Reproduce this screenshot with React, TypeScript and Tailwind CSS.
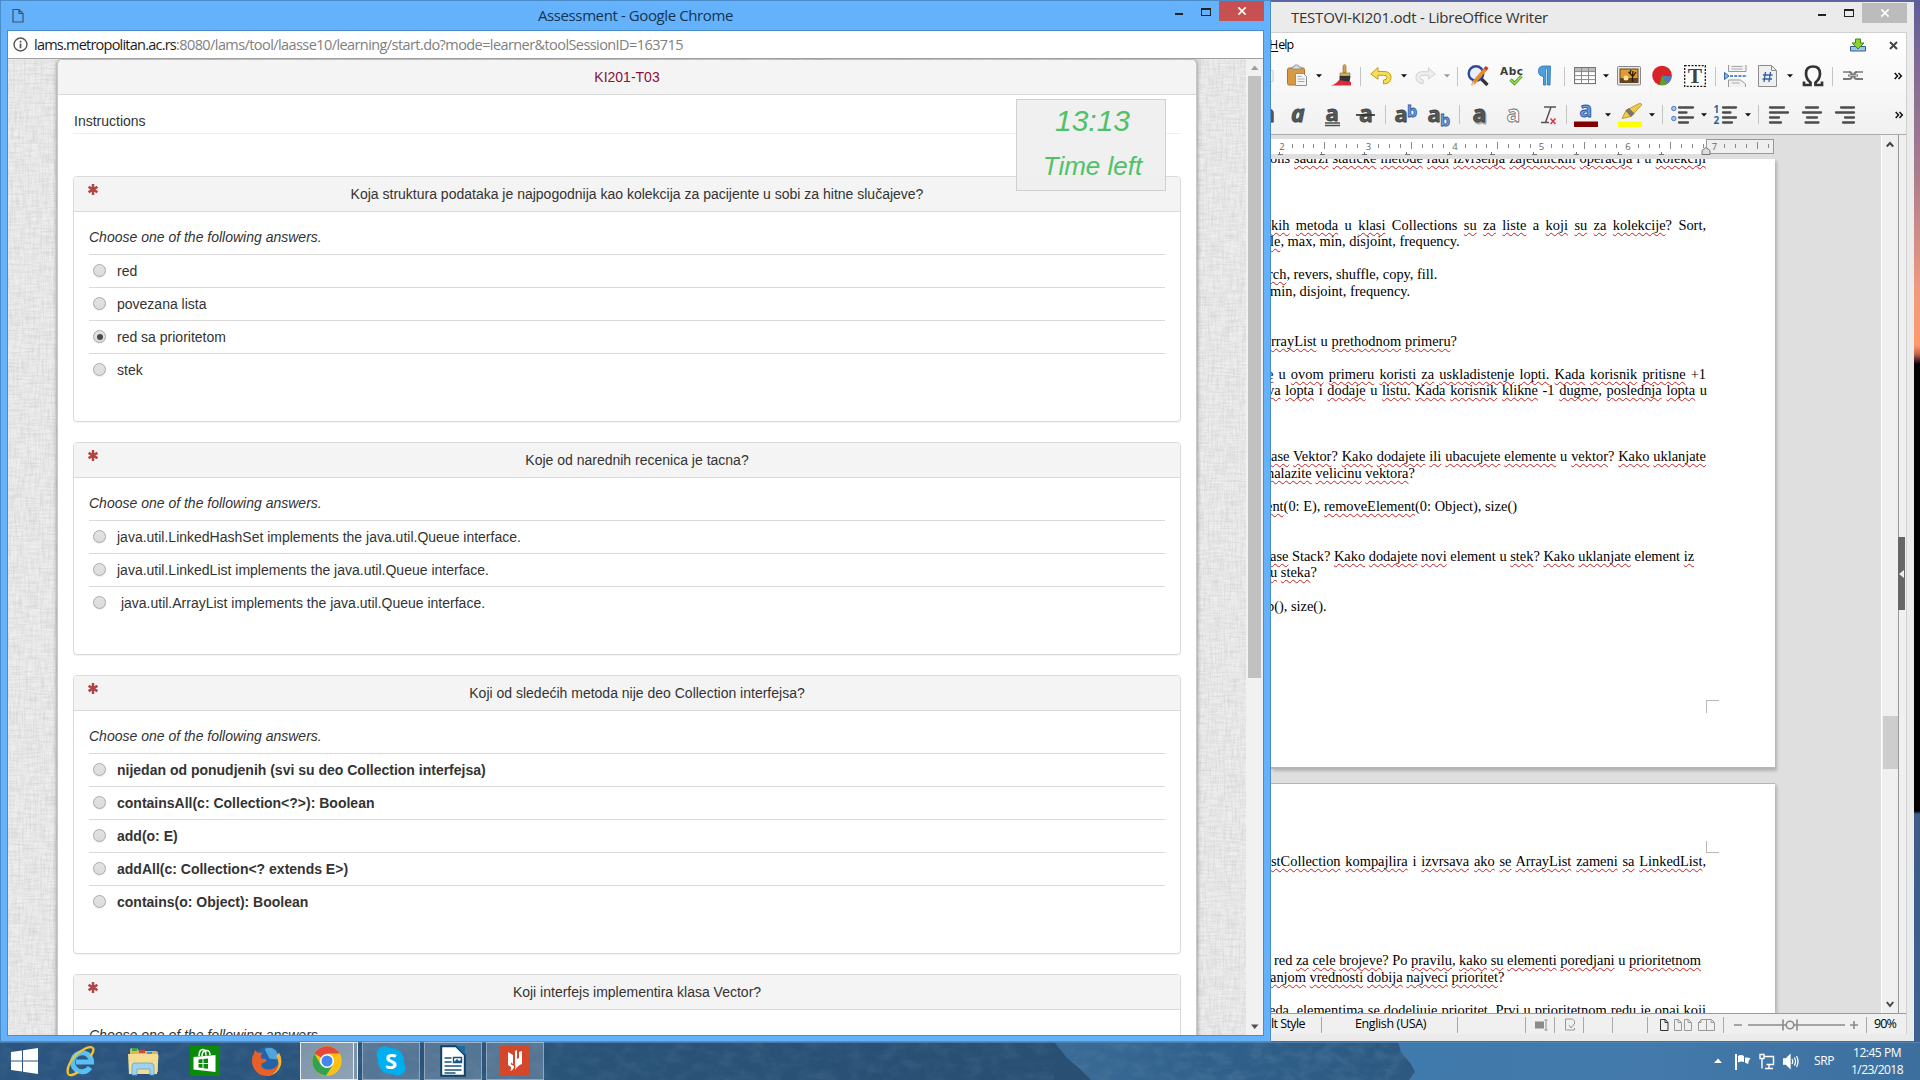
import React, { useLayoutEffect, useRef, useState } from "react";

/** Spreads a label over an exact width by adjusting its tracking. */
function Fit({ w, className = "", children }: { w: number; className?: string; children: string }) {
  const ref = useRef<HTMLSpanElement>(null);
  const [ls, setLs] = useState(0);
  useLayoutEffect(() => {
    if (ref.current) setLs((w - ref.current.getBoundingClientRect().width) / children.length);
  }, []);
  return (
    <span ref={ref} className={"inline-block whitespace-pre " + className} style={{ letterSpacing: ls }}>
      {children}
    </span>
  );
}

/* ---------- Chrome window ---------- */

type Question = { title: string; bold?: boolean; selected?: number; answers: string[] };

const questions: Question[] = [
  {
    title: "Koja struktura podataka je najpogodnija kao kolekcija za pacijente u sobi za hitne slučajeve?",
    selected: 2,
    answers: ["red", "povezana lista", "red sa prioritetom", "stek"],
  },
  {
    title: "Koje od narednih recenica je tacna?",
    answers: [
      "java.util.LinkedHashSet implements the java.util.Queue interface.",
      "java.util.LinkedList implements the java.util.Queue interface.",
      "\u00a0java.util.ArrayList implements the java.util.Queue interface.",
    ],
  },
  {
    title: "Koji od sledećih metoda nije deo Collection interfejsa?",
    bold: true,
    answers: [
      "nijedan od ponudjenih (svi su deo Collection interfejsa)",
      "containsAll(c: Collection<?>): Boolean",
      "add(o: E)",
      "addAll(c: Collection<? extends E>)",
      "contains(o: Object): Boolean",
    ],
  },
  { title: "Koji interfejs implementira klasa Vector?", answers: [] },
];

function Asterisk() {
  return (
    <svg viewBox="0 0 10 12" className="h-[11px] w-[10px]" stroke="#b04543" strokeWidth="2.7">
      <path d="M5 0v12M.2 3.1l9.6 5.8M9.8 3.1L.2 8.9" />
    </svg>
  );
}

function Radio({ on }: { on: boolean }) {
  return (
    <span className="flex size-[13px] items-center justify-center rounded-full border border-[#a9a9a9] bg-linear-to-b from-[#e2e2e2] to-[#dcdcdc] shadow-[0_1px_1px_rgba(0,0,0,0.08)]">
      {on && <span className="size-[6px] rounded-full bg-[#4a4a4a]" />}
    </span>
  );
}

function Card({ q }: { q: Question }) {
  return (
    <section className="mb-[20px] rounded-[4px] border border-[#dadada] bg-white pb-[35px] shadow-[0_1px_1px_rgba(0,0,0,0.05)]">
      <header className="flex h-[35px] rounded-t-[3px] border-b border-[#dadada] bg-[#f4f4f4] pl-[14px]">
        <div className="pt-[7px]">
          <Asterisk />
        </div>
        <h2 className="flex-1 pr-[4px] text-center leading-[35px]">{q.title}</h2>
      </header>
      <div className="px-[15px]">
        <p className="pt-[15px] pb-[7px] italic leading-[20px]">Choose one of the following answers.</p>
        {q.answers.map((a, i) => (
          <div key={a} className="flex h-[33px] border-t border-[#dadada] pl-[4px]">
            <div className="pt-[9px]">
              <Radio on={q.selected === i} />
            </div>
            <span className={q.bold ? "pl-[11px] font-bold leading-[32px]" : "pl-[11px] leading-[32px]"}>{a}</span>
          </div>
        ))}
      </div>
    </section>
  );
}

function Linen() {
  return (
    <svg className="absolute inset-0 h-full w-full">
      <filter id="lv" x="0" y="0" width="100%" height="100%">
        <feTurbulence type="fractalNoise" baseFrequency="0.55 0.06" numOctaves="3" seed="4" />
        <feColorMatrix values="0 0 0 0 .55  0 0 0 0 .55  0 0 0 0 .55  .8 0 0 0 -.3" />
      </filter>
      <filter id="lh" x="0" y="0" width="100%" height="100%">
        <feTurbulence type="fractalNoise" baseFrequency="0.06 0.55" numOctaves="3" seed="9" />
        <feColorMatrix values="0 0 0 0 .55  0 0 0 0 .55  0 0 0 0 .55  .8 0 0 0 -.3" />
      </filter>
      <rect width="100%" height="100%" fill="#eeeeee" />
      <rect width="100%" height="100%" filter="url(#lv)" />
      <rect width="100%" height="100%" filter="url(#lh)" />
    </svg>
  );
}

function WindowButtons({ closeClass, mark }: { closeClass: string; mark: string }) {
  return (
    <div className="flex">
      <svg className="h-[22px] w-[44px]" fill="none" shapeRendering="crispEdges">
        <path d="M0 13h8" stroke="#222" strokeWidth="2" />
        <path d="M26.5 7.5h9v7h-9z" stroke="#222" />
        <path d="M26 7.5h10" stroke="#222" strokeWidth="2" />
      </svg>
      <div className={"flex h-[20px] w-[45px] items-center justify-center " + closeClass}>
        <svg viewBox="0 0 8 8" className="size-[8px]" stroke={mark} strokeWidth="1.7">
          <path d="M.4.4l7.2 7.2M7.6.4L.4 7.6" />
        </svg>
      </div>
    </div>
  );
}

function ChromeWindow() {
  return (
    <div className="flex h-[1042px] w-[1271px] flex-col border border-[#4a8cc8] bg-[#64b2fb]">
      <div className="flex h-[29px] items-start">
        <svg className="mt-[7px] ml-[11px] h-[16px] w-[12px]" fill="none" stroke="#3c5468" strokeWidth="1.2">
          <path d="M1 1.5h6l4 4V14H1zM7 1.5v4h4" />
        </svg>
        <div className="flex-1 pl-[514px] text-[15px] leading-[29px] text-[#16344f]">
          <Fit w={195}>Assessment - Google Chrome</Fit>
        </div>
        <div className="mr-[6px]">
          <WindowButtons closeClass="bg-[#c75050]" mark="#fff" />
        </div>
      </div>
      <div className="mx-[6px] mb-[5px] flex min-h-0 flex-1 flex-col border border-[#4a8cc8] bg-white">
        <div className="flex h-[28px] shrink-0 items-center border-b border-[#a0a0a0] pl-[5px] text-[14.5px]">
          <svg viewBox="0 0 16 16" className="mr-[6px] size-[15px]" fill="none" stroke="#555" strokeWidth="1.5">
            <circle cx="8" cy="8" r="6.9" />
            <path d="M8 7v5M8 4v1.8" strokeWidth="1.8" />
          </svg>
          <Fit w={142} className="text-[#1c1c1c]">lams.metropolitan.ac.rs</Fit>
          <Fit w={507} className="text-[#808080]">:8080/lams/tool/laasse10/learning/start.do?mode=learner&toolSessionID=163715</Fit>
        </div>
        <div className="flex min-h-0 flex-1">
          <div className="relative min-w-0 flex-1 overflow-hidden pr-[49px] pl-[49px] font-['Liberation_Sans',Arial,sans-serif] text-[14px] text-[#333]">
            <Linen />
            <main className="relative mt-px rounded-t-[5px] border-x border-[#c8c8c8] bg-white shadow-[0_0_4px_rgba(0,0,0,0.45)]">
              <h1 className="h-[35px] rounded-t-[5px] border-b border-[#dadada] bg-[#f4f4f4] text-center leading-[34px] text-[#8b0f3c]">KI201-T03</h1>
              <div className="px-[15px] pt-[16px]">
                <div className="mb-[42px] h-[23px] border-b border-[#f0f0f0] pl-px leading-[20px]">Instructions</div>
                {questions.map((q) => (
                  <Card key={q.title} q={q} />
                ))}
              </div>
              <div className="absolute top-[39px] right-[30px] flex h-[92px] w-[150px] flex-col items-center border border-[#cfcfcf] bg-[#eeeeee]/90 pl-[3px] text-[#4fc267] italic">
                <span className="pt-[4px] text-[30px] leading-[34px]">13:13</span>
                <span className="pt-[13px] text-[26px] leading-[30px]">Time left</span>
              </div>
            </main>
          </div>
          <div className="flex w-[17px] flex-col items-center bg-[#f1f1f1]">
            <svg className="h-[17px] w-[15px]" fill="#9c9c9c">
              <path d="M4 11h7.5L7.7 6.5z" />
            </svg>
            <div className="h-[602px] w-[13px] bg-[#c1c1c1]" />
            <div className="flex-1" />
            <svg className="h-[17px] w-[15px]" fill="#505050">
              <path d="M4 6.5h7.5L7.7 11z" />
            </svg>
          </div>
        </div>
      </div>
    </div>
  );
}

/* ---------- LibreOffice Writer ---------- */

const Sep = ({ c }: { c: string }) => <div className={"h-[19px] w-px shrink-0 bg-[#c4c4c4] " + c} />;
const Drop = ({ c, fill = "#111" }: { c: string; fill?: string }) => (
  <svg viewBox="0 0 6 4" className={"h-[4px] w-[6px] shrink-0 " + c} fill={fill}>
    <path d="M0 .3h6L3 3.6z" />
  </svg>
);
const Ico = ({ c, children, vb = "0 0 24 24" }: { c: string; children: React.ReactNode; vb?: string }) => (
  <svg viewBox={vb} className={"h-[24px] shrink-0 overflow-visible " + c} fill="none">
    {children}
  </svg>
);
const serif = "Liberation Serif";
const sans = "Open Sans";
const dejavu = "DejaVu Sans";
const More = ({ c }: { c: string }) => (
  <Ico c={"w-[8px] " + c} vb="0 0 8 24">
    <path d="M.7 9l2.8 3-2.8 3M4.5 9l2.8 3-2.8 3" stroke="#111" strokeWidth="1.5" />
  </Ico>
);

function StandardBar() {
  return (
    <div className="flex h-[38px] items-center overflow-hidden">
      <Ico c="w-[4px]" vb="0 0 4 24">
        <path d="M-6 6.500h8v11h-8" stroke="#ccc" />
      </Ico>
      <Ico c="ml-[12px] w-[20px]" vb="0 0 20 24">
        <rect x=".5" y="4" width="17" height="17" rx="1.5" fill="#d69a45" stroke="#a87432" />
        <path d="M5 5V3h2l1-2h3l1 2h2v2z" fill="#ddd" stroke="#888" strokeWidth=".8" />
        <path d="M8.500 9.500h8l3 3v9h-11z" fill="#f5f5f5" stroke="#909090" />
        <path d="M10.500 12.500h4M10.500 15h7M10.500 17.500h7" stroke="#aaa" />
      </Ico>
      <Drop c="ml-[9px]" />
      <Ico c="ml-[8px] w-[22px]" vb="0 0 22 24">
        <path d="M13 3q0-2.500 1.500-2.500T16 3v6h-3z" fill="#d6a04a" stroke="#9b6f2c" strokeWidth=".7" />
        <path d="M10 9h10v3H10z" fill="#d9b060" stroke="#8b6a30" strokeWidth=".6" />
        <path d="M9.500 12h11l-1 6h-10z" fill="#333" />
        <path d="M9 16c-2 3-5 4.500-8 5.500h20V18z" fill="#d92b3a" />
      </Ico>
      <Sep c="ml-[8px]" />
      <Ico c="ml-[9px] w-[22px]" vb="0 0 22 24">
        <path d="M.8 10L8 3.500v4h6q7 0 7 6t-7.500 6.500v-4q3.500 0 3.500-2.500t-3.500-2.200H8v4z" fill="#f4dc5c" stroke="#c3a015" />
      </Ico>
      <Drop c="ml-[9px]" />
      <Ico c="ml-[8px] w-[21px]" vb="0 0 22 24">
        <path d="M21.200 10L14 3.500v4H8q-7 0-7 6T8.500 20v-4Q5 16 5 13.500t3.500-2.200H14v4z" fill="#eee" stroke="#cfcfcf" />
      </Ico>
      <Drop c="ml-[8px]" fill="#999" />
      <Sep c="ml-[7px]" />
      <Ico c="ml-[9px] w-[22px]" vb="0 0 22 24">
        <circle cx="9" cy="9.500" r="7.300" fill="#e8eefa" stroke="#2b4a9b" strokeWidth="2.400" />
        <path d="M14.500 15l6 6" stroke="#333" strokeWidth="3.200" />
        <path d="M6 19.500L19 4.500" stroke="#e88a2a" strokeWidth="3.600" />
        <path d="M18.200 5.400l2-2.300" stroke="#c5372f" strokeWidth="3.600" />
        <path d="M4.300 21.500l2.600-3" stroke="#e8c89a" strokeWidth="2" />
      </Ico>
      <Ico c="ml-[12px] w-[22px]" vb="0 0 22 24">
        <text x="-1" y="10.500" fontFamily={dejavu} fontWeight="700" fontSize="10.500" textLength="23" fill="#3a3a3a">Abc</text>
        <path d="M9.500 15.500l4 4L20.500 12" stroke="#4e9a1f" strokeWidth="3.200" />
        <path d="M9.500 15.500l4 4L20.500 12" stroke="#9be05a" strokeWidth="1.500" />
      </Ico>
      <Ico c="ml-[15px] w-[13px]" vb="0 0 13 24">
        <path d="M12.500 2H6Q.5 2 .5 7t5 5.500V21h2.300V4.500h1.700V21H12z" fill="#4aa0dc" stroke="#2c6ea8" strokeWidth=".8" />
      </Ico>
      <Sep c="ml-[13px]" />
      <Ico c="ml-[9px] w-[22px]" vb="0 0 22 24">
        <rect x=".6" y="3.600" width="20.800" height="16" fill="#fff" stroke="#666" />
        <rect x="1" y="4" width="20" height="3.500" fill="#bbb" />
        <path d="M.6 7.600h21M.6 11.600h21M.6 15.600h21M7.500 4v16M14.500 4v16" stroke="#888" />
      </Ico>
      <Drop c="ml-[7px]" />
      <Ico c="ml-[8px] w-[24px]" vb="0 0 24 24">
        <rect x=".5" y="2.500" width="23" height="18.500" rx="1" fill="#e8e8e8" stroke="#888" />
        <rect x="3" y="5" width="18" height="13.500" fill="#e59a2d" stroke="#5a4630" />
        <path d="M3 14h18v4H3z" fill="#6a4318" />
        <circle cx="9" cy="14" r="2.500" fill="#ffe79a" />
        <path d="M15.500 18v-6l-4-4M15.500 13l3.500-5M13 9l1-3M15.500 12l.5-5" stroke="#2a1c10" strokeWidth="1.300" />
      </Ico>
      <Ico c="ml-[11px] w-[20px]" vb="0 0 20 24">
        <circle cx="10" cy="11.500" r="9.800" fill="#d8232b" />
        <path d="M10 11.500l9.700 1A9.800 9.800 0 0 1 15 20z" fill="#4a7fc0" />
        <path d="M10 11.500l5 8.500a9.800 9.800 0 0 1-7.500.9z" fill="#59a52c" />
      </Ico>
      <Ico c="ml-[12px] w-[22px]" vb="0 0 22 24">
        <rect x=".7" y="1.700" width="20.600" height="20.600" fill="#fff" stroke="#111" strokeWidth="1.300" strokeDasharray="2 1.400" />
        <text x="3.800" y="19" fontFamily={serif} fontWeight="700" fontSize="21.500" fill="#3f4442">T</text>
      </Ico>
      <Sep c="ml-[9px]" />
      <Ico c="ml-[8px] w-[23px]" vb="0 0 23 24">
        <path d="M4.500 1v6.500h17.500V1M4.500 23v-7h12l5 4v3" fill="#f2f2f2" stroke="#999" />
        <path d="M7.500 2.500h11M7.500 5h11M7.500 19h8" stroke="#aaa" />
        <path d="M6 12h17" stroke="#2d65b5" strokeWidth="1.700" strokeDasharray="3 1.200" />
        <path d="M.5 8.500l4.500 3.500-4.500 3.500z" fill="#8fb2e3" stroke="#2d65b5" />
      </Ico>
      <Ico c="ml-[11px] w-[19px]" vb="0 0 19 24">
        <path d="M.5 1.500h13l5 5v16H.5z" fill="#efefef" stroke="#8c8c8c" />
        <path d="M13.500 1.500v5h5" stroke="#8c8c8c" />
        <path d="M7.500 8L6 18M12.500 8L11 18M5 11h9.500M4.500 15H14" stroke="#2f5da8" strokeWidth="1.300" />
      </Ico>
      <Drop c="ml-[10px]" />
      <Ico c="ml-[10px] w-[20px]" vb="0 0 20 24">
        <path d="M1 17.500v3.500h6.500v-2.500Q3 15 3 9.500 3 2.500 10 2.500t7 7q0 5.500-4.500 9V21H19v-3.500" stroke="#333" strokeWidth="2.700" />
      </Ico>
      <Sep c="ml-[9px]" />
      <Ico c="ml-[9px] w-[22px]" vb="0 0 22 24">
        <path d="M1 8h6q3 0 3 3.500T7 15H1M21 8h-6q-3 0-3 3.500t3 3.500h6M6 11.500h10" stroke="#777" strokeWidth="2" />
        <path d="M1 8h6M21 8h-6M7 11.500h8" stroke="#ccc" strokeWidth=".8" />
      </Ico>
      <More c="ml-[30px]" />
    </div>
  );
}

const A = ({ x = 0, y = 19, size = 23, fill = "#555a58", stroke = "#3b3f3d", it = false }) => (
  <text x={x} y={y} fontFamily={sans} fontWeight="700" fontSize={size} fontStyle={it ? "italic" : "normal"} fill={fill} stroke={stroke} strokeWidth=".8">a</text>
);
const lineInk = "#4a4d4a";

function FormattingBar() {
  return (
    <div className="flex h-[39px] items-center overflow-hidden">
      <Ico c="w-[4px]" vb="0 0 4 24"><A x={-10} /></Ico>
      <Ico c="ml-[15px] w-[18px]" vb="0 0 18 24"><A x={1} it /></Ico>
      <Ico c="ml-[17px] w-[15px]" vb="0 0 15 24">
        <A x={.5} y={17.500} size={22} />
        <path d="M0 20h15M0 22.500h15" stroke={lineInk} strokeWidth="1.300" />
      </Ico>
      <Ico c="ml-[16px] w-[19px]" vb="0 0 19 24">
        <A x={3} />
        <path d="M0 12h19" stroke="#333" strokeWidth="1.700" />
      </Ico>
      <Sep c="ml-[10px]" />
      <Ico c="ml-[8px] w-[23px]" vb="0 0 23 24">
        <A x={.5} size={22} />
        <text x="13" y="14" fontFamily={sans} fontWeight="700" fontSize="16" fill="#6b9bd8" stroke="#2c5aa0" strokeWidth=".8">b</text>
      </Ico>
      <Ico c="ml-[10px] w-[23px]" vb="0 0 23 24">
        <A x={.5} size={22} />
        <text x="13" y="22.500" fontFamily={sans} fontWeight="700" fontSize="16" fill="#6b9bd8" stroke="#2c5aa0" strokeWidth=".8">b</text>
      </Ico>
      <Sep c="ml-[9px]" />
      <Ico c="ml-[12px] w-[15px]" vb="0 0 15 24">
        <A x={1.800} y={20.500} fill="#aaa" stroke="#aaa" />
        <A x={.5} />
      </Ico>
      <Ico c="ml-[19px] w-[15px]" vb="0 0 15 24"><A x={.5} fill="#fff" stroke="#666" /></Ico>
      <Ico c="ml-[20px] w-[15px]" vb="0 0 15 24">
        <path d="M3 4h12M10 4L4.500 19.500M0 19.500h8" stroke="#555" strokeWidth="1.500" />
        <path d="M9.500 15.500l5 5.500M14.500 15.500l-5 5.500" stroke="#d9344a" strokeWidth="1.500" />
      </Ico>
      <Sep c="ml-[10px]" />
      <Ico c="ml-[7px] w-[24px]" vb="0 0 24 24">
        <text x="5.500" y="13.500" fontFamily={sans} fontWeight="700" fontSize="21" fill="#6b9bd8" stroke="#2c5aa0" strokeWidth=".9">a</text>
        <path d="M0 18.500h24V24H0z" fill="#800000" />
      </Ico>
      <Drop c="ml-[7px]" />
      <Ico c="ml-[7px] w-[24px]" vb="0 0 24 24">
        <path d="M4 15.500l4-8L20 1q4-1.500 3.500 1L13 13.500z" fill="#f0c94a" stroke="#b38a1c" strokeWidth=".8" />
        <path d="M8 7.500l3-2 5 5-3 3z" fill="#777" stroke="#555" strokeWidth=".6" />
        <path d="M0 18.500h24V24H0z" fill="#ffff00" />
      </Ico>
      <Drop c="ml-[7px]" />
      <Sep c="ml-[7px]" />
      <Ico c="ml-[8px] w-[23px]" vb="0 0 23 24">
        <circle cx="2.800" cy="5.500" r="2.200" fill="#a9c5ea" stroke="#4a7abd" />
        <circle cx="2.800" cy="15.500" r="2.200" fill="#a9c5ea" stroke="#4a7abd" />
        <path d="M8 4.500h14M8 9.500h7.500M8 14.500h14M8 19.500h9" stroke={lineInk} strokeWidth="2.300" strokeLinecap="round" />
      </Ico>
      <Drop c="ml-[7px]" />
      <Ico c="ml-[7px] w-[23px]" vb="0 0 23 24">
        <text x="-.5" y="9.500" fontFamily={sans} fontWeight="700" fontSize="10" fill="#2f5f9f">1</text>
        <text x="-.5" y="21" fontFamily={sans} fontWeight="700" fontSize="10" fill="#2f5f9f">2</text>
        <path d="M9 4.500h13M9 9.500h7.500M9 14.500h13M9 19.500h9" stroke={lineInk} strokeWidth="2.300" strokeLinecap="round" />
      </Ico>
      <Drop c="ml-[8px]" />
      <Sep c="ml-[7px]" />
      <Ico c="ml-[10px] w-[20px]" vb="0 0 20 24">
        <path d="M1 4.500h14M1 9.500h18M1 14.500h9M1 19.500h11" stroke={lineInk} strokeWidth="2.300" strokeLinecap="round" />
      </Ico>
      <Ico c="ml-[13px] w-[20px]" vb="0 0 20 24">
        <path d="M4 4.500h12M1 9.500h18M5 14.500h10M3.500 19.500h13" stroke={lineInk} strokeWidth="2.300" strokeLinecap="round" />
      </Ico>
      <Ico c="ml-[13px] w-[20px]" vb="0 0 20 24">
        <path d="M6 4.500h13M1 9.500h18M10 14.500h9M8 19.500h11" stroke={lineInk} strokeWidth="2.300" strokeLinecap="round" />
      </Ico>
      <More c="ml-[40px]" />
    </div>
  );
}

function Ruler() {
  const ticks: React.ReactNode[] = [];
  for (let i = 0; i <= 45; i++) {
    const x = 10.5 + (i * 86.5) / 8;
    if (x > 502) break;
    if (i % 8 === 0) ticks.push(<text key={i} x={x + 0.5} y="11" textAnchor="middle" fontSize="9.500" fontFamily={sans} fill="#666">{2 + i / 8}</text>);
    else ticks.push(<path key={i} d={i % 8 === 4 ? `M${x} 3v7` : `M${x} 5v4`} stroke="#888" />);
  }
  const stops: React.ReactNode[] = [];
  for (let i = 0; i < 11; i++) stops.push(<path key={i} d={`M${8.5 + i * 42.4} 13v3M${6.5 + i * 42.4} 15.500h5`} stroke="#777" />);
  return (
    <svg className="mt-[4px] h-[16px] w-[504px]" fill="none" shapeRendering="crispEdges">
      <rect width="436" height="15" fill="#fff" />
      <rect x="435.500" y=".5" width="67" height="14" fill="#efefef" stroke="#999" />
      {ticks}
      {stops}
      <path d="M431 15.500v-4l4-3 4 3v4z" fill="#ddd" stroke="#777" shapeRendering="auto" />
    </svg>
  );
}

/* A line of the document: [left start, width, text]; words between underscores are misspelt. */
type Line = [number, number, string] | null;

const pageOne: Line[] = [
  [-1, 436, "ons _sadrzi_ _staticke_ _metode_ _radi_ _izvrsenja_ _zajednickih_ _operacija_ i u _kolekciji_"],
  null, null, null,
  [0, 435, "_kih_ _metoda_ u _klasi_ Collections _su_ _za_ _liste_ a _koji_ _su_ _za_ _kolekcije_? Sort,"],
  [-1, 188, "_le_, max, min, disjoint, frequency."],
  null,
  [-3, 168, "_rch_, revers, shuffle, copy, fill."],
  [-1, 139, "min, disjoint, frequency."],
  null, null,
  [0, 186, "_rrayList_ u _prethodnom_ _primeru_?"],
  null,
  [-4, 439, "_e_ u _ovom_ _primeru_ _koristi_ _za_ _uskladistenje_ _lopti._ _Kada_ _korisnik_ _pritisne_ +1"],
  [-4, 440, "_va_ _lopta_ i _dodaje_ u _listu._ _Kada_ _korisnik_ _klikne_ -1 _dugme_, _poslednja_ _lopta_ u"],
  null, null, null,
  [0, 435, "_ase_ _Vektor_? _Kako_ _dodajete_ _ili_ _ubacujete_ _elemente_ u _vektor_? _Kako_ _uklanjate_"],
  [-4, 146, "_nalazite_ _velicinu_ _vektora_?"],
  null,
  [-5, 247, "_ent_(0: E), _removeElement_(0: Object), size()"],
  null, null,
  [-1, 423, "_ase_ Stack? _Kako_ _dodajete_ _novi_ element u _stek_? _Kako_ _uklanjate_ element _iz_"],
  [-1, 46, "_u_ _steka_?"],
  null,
  [-4, 58, "p(), size()."],
];

const pageTwo: Line[] = [
  [0, 435, "_stCollection_ _kompajlira_ i _izvrsava_ _ako_ _se_ _ArrayList_ _zameni_ _sa_ _LinkedList_,"],
  null, null, null, null, null,
  [3, 427, "red _za_ _cele_ _brojeve_? Po _pravilu_, _kako_ _su_ _elementi_ _poredjani_ u _prioritetnom_"],
  [-1, 234, "_anjom_ _vrednosti_ _dobija_ _najveci_ _prioritet_?"],
  null,
  [-2, 437, "_eda_, _elementima_ _se_ _dodeljuje_ _prioritet_. _Prvi_ u _prioritetnom_ _redu_ je _onaj_ _koji_"],
];

function Lines({ lines }: { lines: Line[] }) {
  return (
    <>
      {lines.map((l, i) => (
        <div key={i} className="h-[16.57px] leading-[16.57px] whitespace-nowrap">
          {l && (
            <div className="[text-align-last:justify]" style={{ marginLeft: l[0], width: l[1] }}>
              {l[2].split("_").map((t, k) =>
                k % 2 ? (
                  <span key={k} className="underline decoration-[#c02020] decoration-wavy decoration-[0.8px] underline-offset-[2px] [text-decoration-skip-ink:none]">{t}</span>
                ) : (
                  t
                ),
              )}
            </div>
          )}
        </div>
      ))}
    </>
  );
}

function Document() {
  return (
    <div className="h-[854px] overflow-hidden bg-[#dfdfdf] font-['Liberation_Serif',serif] text-[14.4px] text-black">
      <div className="h-[610px] w-[504px] overflow-hidden border-b-2 border-[#b4b4b4] bg-white shadow-[2px_2px_3px_rgba(0,0,0,0.2)]">
        <div className="mt-[-8.7px] h-[549.7px]">
          <Lines lines={pageOne} />
        </div>
        <div className="ml-[435px] h-[13px] w-[13px] border-t border-l border-[#b8b8b8]" />
      </div>
      <div className="mt-[14px] h-[300px] w-[504px] border-t border-[#b4b4b4] bg-white shadow-[2px_2px_3px_rgba(0,0,0,0.2)]">
        <div className="h-[57px]" />
        <div className="ml-[435px] h-[12px] w-[13px] border-b border-l border-[#b8b8b8]" />
        <Lines lines={pageTwo} />
      </div>
    </div>
  );
}

function StatusBar() {
  const s = "h-[16px] w-px shrink-0 bg-[#a8a8a8] ";
  return (
    <div className="flex h-[22px] items-center border-t border-[#9a9a9a] bg-[#f0f0f0] pt-px text-[12.5px] text-black">
      <Fit w={34}>lt Style</Fit>
      <div className={s + "ml-[16px]"} />
      <Fit w={71} className="ml-[33px]">English (USA)</Fit>
      <div className={s + "ml-[31px]"} />
      <div className={s + "ml-[67px]"} />
      <svg className="ml-[9px] h-[12px] w-[13px] shrink-0" stroke="#8a8a8a">
        <path d="M0 6h9" strokeWidth="7" />
        <path d="M11 1v10M9.500 1h3M9.500 11h3" />
      </svg>
      <div className={s + "ml-[6px]"} />
      <svg className="ml-[10px] h-[14px] w-[12px] shrink-0" fill="none" stroke="#999">
        <path d="M9.500 5V3l-2-2H.5v11h9v-2M4 7l2 3 4-5" />
      </svg>
      <div className={s + "ml-[6px]"} />
      <div className={s + "ml-[28px]"} />
      <div className={s + "ml-[34px]"} />
      <svg className="ml-[12px] h-[12px] w-[56px] shrink-0" fill="none">
        <path d="M.5.500h5l2.500 3v8H.5zM5 .5v3h3" stroke="#333" />
        <path d="M14.500.500h4l3 3v8h-7zM18 .5v3h3M24.500.500h4l3 3v8h-7zM28 .5v3h3" stroke="#999" />
        <path d="M46.500 11.500h-8v-8l3-3h5zM46.500.500h5l3 3v8h-8zM41 .5v3h-3M51 .5v3h3" stroke="#999" />
      </svg>
      <div className={s + "ml-[7px]"} />
      <svg className="ml-[10px] h-[14px] w-[126px] shrink-0" fill="none" stroke="#8a8a8a" strokeWidth="1.600">
        <path d="M0 7h8M14 7h97M116 7h8M120 3v8M49 1.500v11M63 1.500v11" />
        <circle cx="56" cy="7" r="3.800" fill="#f0f0f0" />
      </svg>
      <div className={s + "ml-[6px]"} />
      <Fit w={22} className="ml-[7px]">90%</Fit>
    </div>
  );
}

function WriterWindow() {
  return (
    <div className="flex h-[1041px] w-[643px] flex-col border-t-2 border-[#5d66a2] bg-[#ebebeb]">
      <div className="flex h-[30px] items-start">
        <div className="flex-1 pl-[20px] text-[15px] leading-[30px] text-[#333]">
          <Fit w={257}>TESTOVI-KI201.odt - LibreOffice Writer</Fit>
        </div>
        <div className="mr-[7px]">
          <WindowButtons closeClass="mt-px bg-[#bcbcbc]" mark="#fff" />
        </div>
      </div>
      <div className="mr-[7px] flex h-[1002px] flex-col border-t border-r border-[#d0d0d0] bg-[#dfdfdf]">
        <div className="h-[102px] border-b border-[#acacac] bg-linear-to-b from-white to-[#f1f1f1]">
          <div className="flex h-[24px] items-center overflow-hidden text-[12.5px] text-black">
            <div className="-ml-[2px] flex">
              <span className="underline underline-offset-2">H</span>
              <Fit w={15}>elp</Fit>
            </div>
            <svg className="ml-[557px] h-[14px] w-[16px]">
              <path d="M.5 8.500h15v4.500H.5z" fill="#9cc3e8" stroke="#2d5e94" />
              <path d="M5.500 1h5v4H14l-6 6-6-6h3.500z" fill="#8bd32f" stroke="#47821a" />
            </svg>
            <svg className="ml-[23px] h-[9px] w-[9px]" stroke="#444" strokeWidth="2">
              <path d="M1 1l7 7M8 1L1 8" />
            </svg>
          </div>
          <StandardBar />
          <FormattingBar />
        </div>
        <div className="flex h-[878px]">
          <div className="w-[610px]">
            <Ruler />
            <div className="h-[4px]" />
            <Document />
          </div>
          <div className="flex w-[17px] flex-col items-center border-l border-white bg-[#f0f0f0]">
            <svg className="mt-[6px] h-[7px] w-[8px]" fill="none" stroke="#444" strokeWidth="2">
              <path d="M.8 5.500L4 2l3.200 3.500" />
            </svg>
            <div className="h-[568px]" />
            <div className="h-[53px] w-[15px] bg-[#cdcdcd]" />
            <div className="flex-1" />
            <svg className="mb-[5px] h-[7px] w-[8px]" fill="none" stroke="#444" strokeWidth="2">
              <path d="M.8 1L4 5l3.200-4" />
            </svg>
          </div>
          <div className="flex flex-1 flex-col border-l border-[#999] bg-[#f0f0f0] pt-[402px]">
            <div className="-ml-px flex h-[73px] w-[7px] items-center bg-[#666]">
              <svg className="h-[8px] w-[6px]" fill="#eee">
                <path d="M6 0v8L1 4z" />
              </svg>
            </div>
          </div>
        </div>
        <StatusBar />
      </div>
    </div>
  );
}

/* ---------- Taskbar ---------- */

function Taskbar() {
  return (
    <div className="relative flex h-[38px] items-center overflow-hidden bg-[#2a5077] text-white">
      <svg className="absolute inset-0 h-full w-full">
        <defs>
          <linearGradient id="tb">
            <stop offset="0" stopColor="#2b557f" />
            <stop offset=".3" stopColor="#2a5378" />
            <stop offset=".55" stopColor="#294f72" />
          </linearGradient>
          <linearGradient id="sky">
            <stop offset="0" stopColor="#4079ab" />
            <stop offset=".5" stopColor="#437aab" />
            <stop offset="1" stopColor="#3c6f9e" />
          </linearGradient>
          <linearGradient id="stone">
            <stop offset="0" stopColor="#3a6c97" />
            <stop offset=".4" stopColor="#30618c" />
            <stop offset="1" stopColor="#2c5880" />
          </linearGradient>
          <filter id="rock" x="0" y="0" width="100%" height="100%">
            <feTurbulence type="fractalNoise" baseFrequency="0.06 0.1" numOctaves="5" seed="3" />
            <feColorMatrix values="0 0 0 0 .1  0 0 0 0 .22  0 0 0 0 .36  2 0 0 0 -.8" />
            <feComposite in2="SourceGraphic" operator="in" />
          </filter>
        </defs>
        <rect width="1920" height="39" fill="url(#tb)" />
        <rect x="1380" width="540" height="39" fill="url(#sky)" />
        <path d="M1054 0h344l3 10 10 12 4 8-6 8h-318l-12-12-12-10z" fill="url(#stone)" />
        <path d="M1054 0h344l3 10 10 12 4 8-6 8h-318l-12-12-12-10z" fill="#30618e" filter="url(#rock)" opacity=".45" />
        <rect width="1054" height="39" filter="url(#rock)" opacity=".25" />
        <path d="M0 .5h1920" stroke="#5487b5" opacity=".8" />
      </svg>
      <div className="relative flex h-full w-full items-center">
        <svg viewBox="0 0 27 26" className="ml-[11px] h-[26px] w-[27px]" fill="#fff">
          <path d="M0 4l11-1.600V12.500H0zM12 2.200L27 0v12.500H12zM0 13.500h11v10L0 22zM12 13.500h15V26l-15-2.300z" />
        </svg>
        <svg viewBox="0 0 30 30" className="ml-[28px] h-[31px] w-[30px]" fill="none">
          <path d="M24 21a9.500 9.500 0 1 1 1.600-5.500H10" stroke="#58c0f5" strokeWidth="5" />
          <path d="M24.500 10C32-1 24-1 16 4 7 9 0 20 2 27c1 3 6 1.500 10-1.500" stroke="#f4c430" strokeWidth="2.300" />
        </svg>
        <svg viewBox="0 0 32 30" className="ml-[31px] h-[30px] w-[32px]">
          <path d="M3 4q0-2 2-2h5l2 3h17q2 0 2 2v19H3z" fill="#d9b75e" />
          <path d="M5 2h5v3H5z" fill="#3fa04a" />
          <path d="M12 4h6v3h-6z" fill="#c84b3c" />
          <path d="M20 6h5v3h-5z" fill="#4a8fd0" />
          <path d="M1 8h29q1.500 0 1.500 2L30 28H2z" fill="#f3dd93" />
          <path d="M5 29V20q0-3 3-3h15q4 0 4 3v9h-4v-6H10v6z" fill="#9dd3ef" stroke="#5a9cc8" strokeWidth=".7" />
        </svg>
        <svg viewBox="0 0 30 30" className="ml-[31px] size-[30px]">
          <path d="M0 0h30v30H0z" fill="#0a8a0a" />
          <path d="M3.500 11L25.500 9v17l-22-2.500z" fill="#fff" />
          <path d="M9 10q0-6 3.500-6.500T16 9.500M12 10q0-5 4-5.500t4 4.500" fill="none" stroke="#fff" strokeWidth="1.500" />
          <path d="M8.500 13.500l4-.4v4h-4zM13.500 13l4.500-.5V17h-4.500zM8.500 18h4v4l-4-.4zM13.500 18h4.500v4.700l-4.500-.5z" fill="#0a8a0a" />
        </svg>
        <svg viewBox="0 0 32 32" className="ml-[31px] size-[31px]">
          <circle cx="17" cy="15" r="14" fill="#2563a8" />
          <path d="M14 3q6-3 11 1 4 4 2 10l-8-1z" fill="#4fa5dc" />
          <path d="M29 7q5 9 0 17-5 7-13 7 10-3 12-11 1-5-2-10z" fill="#f9b233" />
          <path d="M3 8l1-4 3 3h5q-3 3-1 6l5 1q0 3-5 4-1 5 5 6 8 1 12-5 0 5-4 8-3 4-9 4-9-1-12.500-9Q-1 14 3 8z" fill="#e6602a" />
        </svg>
        <div className="ml-[18px] flex h-[38px] w-[54px] items-center justify-center border border-white/80 bg-linear-to-br from-[#7d93a8] to-[#8fa3b4]">
          <svg viewBox="0 0 30 30" className="size-[30px]">
            <circle cx="15" cy="15" r="14.700" fill="#fbc116" />
            <path d="M15 15L2.300 7.600A14.700 14.700 0 0 1 27.700 7.600H15z" fill="#e2483b" />
            <path d="M2.300 7.600A14.700 14.700 0 0 0 14 29.700L21 18.500 15 15 8.700 18.500z" fill="#31a350" />
            <circle cx="15" cy="15" r="7" fill="#fff" />
            <circle cx="15" cy="15" r="5.500" fill="#4285f4" />
          </svg>
        </div>
        <div className="h-[38px] w-[4px] border border-l-0 border-white/80 bg-[#7d93a8]" />
        <div className="ml-[4px] flex h-[38px] w-[58px] items-center justify-center border border-white/35 bg-white/20">
          <svg viewBox="0 0 30 30" className="size-[30px]">
            <circle cx="15" cy="15" r="13" fill="#00aff0" />
            <circle cx="8.500" cy="8.500" r="8" fill="#00aff0" />
            <circle cx="21.500" cy="21.500" r="8" fill="#00aff0" />
            <text x="15" y="22.500" textAnchor="middle" fontFamily={sans} fontWeight="700" fontSize="22" fill="#fff">S</text>
          </svg>
        </div>
        <div className="ml-[4px] flex h-[38px] w-[58px] items-center justify-center border border-white/35 bg-white/20">
          <svg viewBox="0 0 26 32" className="h-[32px] w-[26px]">
            <path d="M1.200 1.200H16L24.800 10v20.800H1.200z" fill="#fff" stroke="#0f4264" strokeWidth="2" />
            <path d="M16 1h9v9z" fill="#1b6da0" />
            <path d="M4.500 13h7M4.500 17h7M4.500 21h17M4.500 25h17M4.500 28h11" stroke="#145680" strokeWidth="1.700" />
            <path d="M13.500 12.500h8v5h-8z" fill="#fff" stroke="#145680" strokeWidth="1.400" />
            <path d="M14 17l3-3 2 2 2-1v2z" fill="#145680" />
          </svg>
        </div>
        <div className="ml-[4px] flex h-[38px] w-[58px] items-center justify-center border border-white/35 bg-white/20">
          <svg viewBox="0 0 30 30" className="size-[30px]">
            <path d="M0 0h30v30H0z" fill="#d4472a" />
            <path d="M8 6l5 3v9l-2-1.500v2l3 1.500q0 4-4 5 2-2 1-4l-3-2zM15 5l2-1v9l2-1V6l3-1v13q-4 1-7 6 1-3 0-6z" fill="#fff" />
          </svg>
        </div>
        <div className="flex-1" />
        <svg className="h-[6px] w-[8px]" fill="#fff">
          <path d="M0 5h8L4 .5z" />
        </svg>
        <svg className="ml-[13px] h-[17px] w-[16px]" fill="#fff">
          <path d="M0 1h2v16H0zM3 3q3-2 6 0v6Q6 8 3 9.500zM10 4.500q3-.5 5.500 1l-2 2.500 0 2.500q-2 .5-3.500-1z" />
        </svg>
        <svg className="ml-[8px] h-[17px] w-[16px]" fill="none" stroke="#fff" strokeWidth="1.400">
          <path d="M5.500 3.500h9v8h-7M10 12v3M6 15.500h8M1 1.500h4v4H1zM3 6v9.500" />
        </svg>
        <svg className="ml-[8px] h-[17px] w-[16px]" fill="none" stroke="#fff" strokeWidth="1.300">
          <path d="M0 6h3l4-4v13l-4-4H0z" fill="#fff" />
          <path d="M9 6q1.500 2.500 0 5M11.300 4.500q2.500 4 0 8M13.500 3q3 5.500 0 11" />
        </svg>
        <Fit w={20} className="ml-[15px] text-[12px]">SRP</Fit>
        <div className="mr-[16px] ml-[16px] flex w-[54px] flex-col items-center text-[12px] leading-[17px]">
          <Fit w={48}>12:45 PM</Fit>
          <Fit w={52}>1/23/2018</Fit>
        </div>
      </div>
    </div>
  );
}

export default function App() {
  return (
    <div className="flex h-[1080px] w-[1920px] flex-col overflow-hidden bg-[#3f6f9c] font-['Open_Sans','Noto_Sans',sans-serif]">
      <div className="flex h-[1042px]">
        <ChromeWindow />
        <WriterWindow />
        <div className="flex-1 bg-[linear-gradient(#5d5f98_0px,#7d6a94_60px,#a77c8e_170px,#f09a80_290px,#ff9a6c_345px,#c0664c_354px,#7a3a38_358px,#050507_364px,#000_811px,#3d5c88_814px,#3f6290_1041px)]" />
      </div>
      <Taskbar />
    </div>
  );
}
